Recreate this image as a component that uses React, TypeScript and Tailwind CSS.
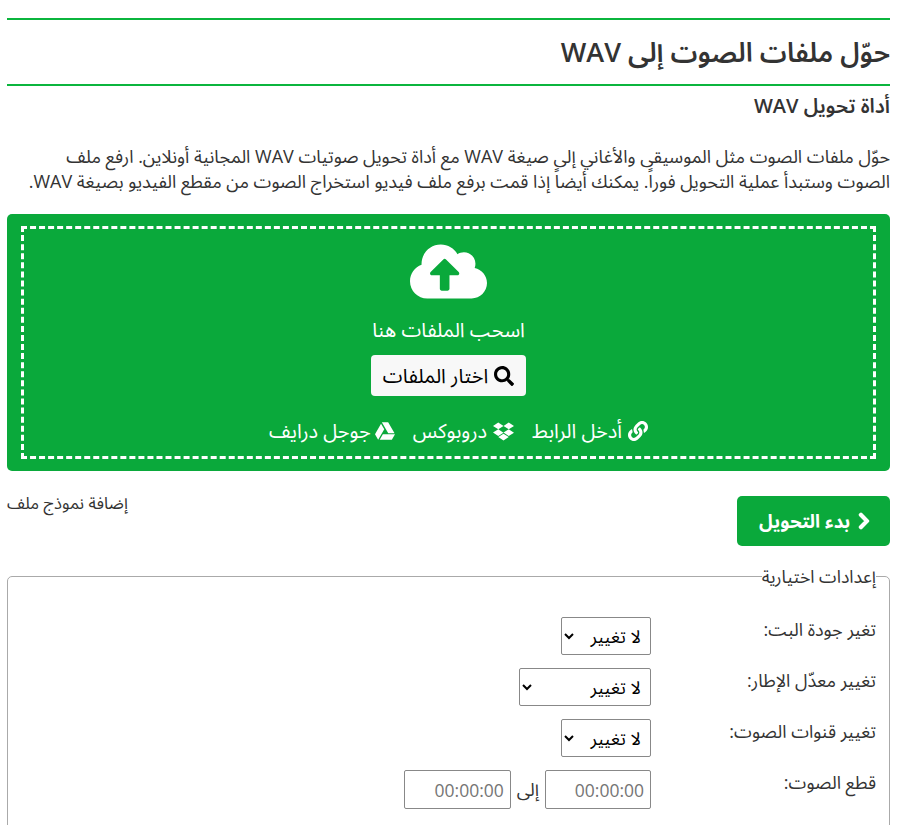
import { FaCloudUploadAlt, FaSearch, FaLink, FaDropbox, FaGoogleDrive, FaChevronRight } from "react-icons/fa";

const font = "font-['Open_Sans','Noto_Sans_Arabic',sans-serif]";

function Row({ label, children }: { label: string; children: React.ReactNode }) {
  return (
    <div className="flex items-start">
      <label className="w-[225px] shrink-0 text-[18px] leading-[24px] text-[#333]">{label}</label>
      <div className="flex items-center">{children}</div>
    </div>
  );
}

function Sel({ w }: { w: string }) {
  return (
    <select className={`${w} h-[38px] rounded-[2px] border border-[#888] bg-white pl-[9px] pr-[5px] text-[18px] text-black [appearance:auto]`} dir="rtl">
      <option>لا تغيير</option>
    </select>
  );
}

export default function App() {
  return (
    <div dir="rtl" className={`${font} h-[825px] overflow-hidden bg-white px-[7px] text-[#333]`}>
      <div className="mt-[18px] border-y-2 border-[#0bb53d] py-[15px]">
        <h1 className="text-[27px] leading-[34px] font-semibold text-[#333]">حوّل ملفات الصوت إلى WAV</h1>
      </div>
      <h2 className="mt-[8px] text-[20px] leading-[24px] font-semibold text-[#333]">أداة تحويل WAV</h2>
      <p className="mt-[26px] pl-[8px] text-[18px] leading-[25px] text-[#333]">
        حوّل ملفات الصوت مثل الموسيقى والأغاني إلى صيغة WAV مع أداة تحويل صوتيات WAV المجانية أونلاين. ارفع ملف الصوت وستبدأ عملية التحويل فوراً. يمكنك أيضاً إذا قمت برفع ملف فيديو استخراج الصوت من مقطع الفيديو بصيغة WAV.
      </p>
      <div className="mt-[20px] h-[257px] rounded-[5px] bg-[#0aa93b] px-[14px] py-[12px]">
        <div className="flex h-[233px] flex-col items-center border-[3px] border-dashed border-white text-white">
          <FaCloudUploadAlt className="mt-[4px] text-[77px] leading-none" />
          <div className="mt-[7px] text-[20px] leading-[26px]">اسحب الملفات هنا</div>
          <button className="mt-[12px] flex h-[41px] w-[155px] items-center justify-center gap-[6px] rounded-[4px] bg-[#f8f8f8] text-[20px] text-black">
            <FaSearch className="text-[20px]" />
            <span>اختار الملفات</span>
          </button>
          <div className="mt-[22px] flex items-center gap-[18px] pl-[20px] text-[20px] leading-[26px]">
            <span className="flex items-center gap-[6px]"><FaLink className="text-[20px]" />أدخل الرابط</span>
            <span className="flex items-center gap-[6px]"><FaDropbox className="text-[21px]" />دروبوكس</span>
            <span className="flex items-center gap-[4px]"><FaGoogleDrive className="text-[20px]" />جوجل درايف</span>
          </div>
        </div>
      </div>
      <div className="mt-[25px] flex items-start justify-between">
        <button className="flex h-[50px] w-[153px] items-center justify-center gap-[5px] rounded-[5px] bg-[#0aa93b] pl-[5px] text-[18.5px] font-bold text-white">
          <FaChevronRight className="text-[18px]" stroke="currentColor" strokeWidth={40} />
          <span>بدء التحويل</span>
        </button>
        <span className="mt-[-3px] text-[16.7px] leading-[20px] text-[#333]">إضافة نموذج ملف</span>
      </div>
      <fieldset className="mt-[19px] h-[300px] rounded-[5px] border border-[#aaa] px-[13px] pt-[30px]">
        <legend className="text-[17.7px] leading-[22px] text-[#333]">إعدادات اختيارية</legend>
        <div className="flex flex-col gap-[13px]">
          <Row label="تغير جودة البت:"><Sel w="w-[90px]" /></Row>
          <Row label="تغيير معدّل الإطار:"><Sel w="w-[132px]" /></Row>
          <Row label="تغيير قنوات الصوت:"><Sel w="w-[90px]" /></Row>
          <Row label="قطع الصوت:">
            <input placeholder="00:00:00" className="h-[39px] w-[106px] rounded-[2px] border border-[#888] px-[6px] text-[17.5px] placeholder:text-[#757575]" />
            <span className="mx-[6px] text-[18px] text-[#333]">إلى</span>
            <input placeholder="00:00:00" className="h-[39px] w-[107px] rounded-[2px] border border-[#888] px-[6px] text-[17.5px] placeholder:text-[#757575]" />
          </Row>
        </div>
      </fieldset>
    </div>
  );
}
